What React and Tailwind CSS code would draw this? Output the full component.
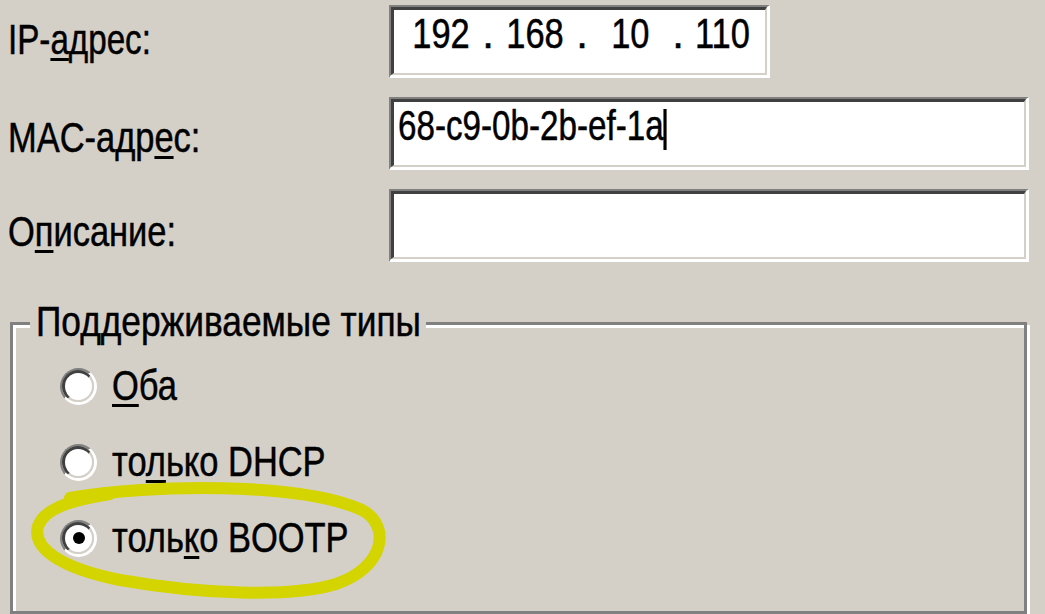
import React from 'react';

const font = { fontFamily: '"Liberation Sans", Arial, sans-serif' };

// the dialog font is narrower than Arial, squeeze it
function T({ children, className = 'scale-x-[0.82]' }) {
  return (
    <span className={`inline-block whitespace-nowrap origin-left ${className}`}>{children}</span>
  );
}

function U({ children }) {
  return <span className="underline decoration-3 underline-offset-4">{children}</span>;
}

// classic sunken edit box
function Sunken({ className = '', children }) {
  return (
    <div className={`border-t-2 border-l-2 border-b-[3px] border-r-[3px] border-t-[#808080] border-l-[#808080] border-b-white border-r-white ${className}`}>
      <div className="h-full border-t-[3px] border-l-[3px] border-b-2 border-r-2 border-t-[#404040] border-l-[#404040] border-b-[#d4d0c8] border-r-[#d4d0c8] bg-white">
        {children}
      </div>
    </div>
  );
}

function Radio({ checked, children }) {
  return (
    <div className="flex items-center h-[48px]">
      <div className="w-[37px] h-[37px] rounded-full border-t-2 border-l-2 border-b-[3px] border-r-[3px] border-t-[#808080] border-l-[#808080] border-b-white border-r-white">
        <div className="w-full h-full rounded-full border-t-[3px] border-l-[3px] border-b-2 border-r-2 border-t-[#404040] border-l-[#404040] border-b-[#d4d0c8] border-r-[#d4d0c8] bg-white flex items-center justify-center">
          {checked && <div className="w-[12px] h-[12px] rounded-full bg-black" />}
        </div>
      </div>
      <span className="ml-[15px]">
        <T>{children}</T>
      </span>
    </div>
  );
}

function Octet({ children, className = 'w-[78px]' }) {
  return (
    <span className={`${className} flex justify-center`}>
      <span className="inline-block scale-x-[0.82]">{children}</span>
    </span>
  );
}

export default function App() {
  return (
    <div
      className="relative w-[1045px] h-[614px] overflow-hidden bg-[#d4d0c8] text-black text-[42px] leading-[48px] [-webkit-text-stroke:0.5px_#000]"
      style={font}
    >
      <div className="pt-[5px] flex flex-col gap-[19px]">
        {/* IP */}
        <div className="flex h-[73px]">
          <div className="w-[389px] pl-[8px] pt-[11px]">
            <T className="scale-x-[0.79]">
              IP-<U>а</U>дрес:
            </T>
          </div>
          <Sunken className="w-[381px] h-[73px]">
            <div className="flex pl-[8px]">
              <Octet>192</Octet>
              <span className="w-[16px] text-center">.</span>
              <Octet>168</Octet>
              <span className="w-[16px] text-center">.</span>
              <Octet className="w-[80px]">10</Octet>
              <span className="w-[16px] text-center">.</span>
              <Octet className="w-[72px]">110</Octet>
            </div>
          </Sunken>
        </div>

        {/* MAC */}
        <div className="flex h-[73px]">
          <div className="w-[389px] pl-[8px] pt-[17px]">
            <T>
              MAC-адр<U>е</U>с:
            </T>
          </div>
          <Sunken className="w-[640px] h-[73px]">
            <div className="pl-[4px]">
              <T className="scale-x-[0.79]">
                68-c9-0b-2b-ef-1a
                <span className="inline-block w-[4px] h-[41px] align-[-10px] bg-black" />
              </T>
            </div>
          </Sunken>
        </div>

        {/* Description */}
        <div className="flex h-[73px]">
          <div className="w-[389px] pl-[8px] pt-[19px]">
            <T>
              О<U>п</U>исание:
            </T>
          </div>
          <Sunken className="w-[640px] h-[73px]" />
        </div>
      </div>

      {/* Group box */}
      <div className="relative ml-[10px] mt-[60px] w-[1017px] h-[292px] border-[3px] border-[#808080] shadow-[inset_3px_3px_0_#fff,3px_3px_0_#fff]">
        <span className="absolute left-[17px] -top-[27px] w-[396px] px-[6px] bg-[#d4d0c8]">
          <T className="scale-x-[0.84]">Поддерживаемые типы</T>
        </span>
        <div className="pl-[47px] pt-[37px] flex flex-col gap-[28px]">
          <Radio>
            <U>О</U>ба
          </Radio>
          <Radio>
            то<U>л</U>ько DHCP
          </Radio>
          <Radio checked>
            толь<U>к</U>о BOOTP
          </Radio>
        </div>
      </div>

      {/* yellow hand-drawn highlight */}
      <svg className="absolute inset-0 pointer-events-none" width="1045" height="614" viewBox="0 0 1045 614">
        <path
          d="M 70 498 C 150 484, 300 482, 362 510 C 392 526, 384 568, 336 584 C 290 598, 200 594, 120 580 C 60 568, 32 548, 38 526 C 45 508, 72 500, 110 494"
          fill="none"
          stroke="#d4d400"
          strokeWidth="12"
          strokeLinecap="round"
        />
      </svg>
    </div>
  );
}
